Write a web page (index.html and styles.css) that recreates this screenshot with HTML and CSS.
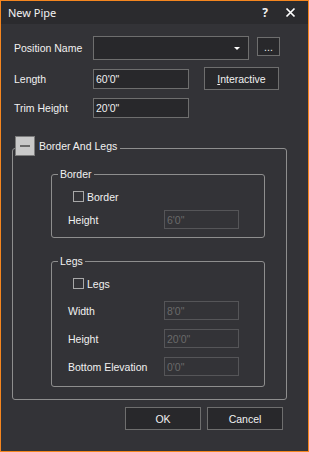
FILE: index.html
```html
<!DOCTYPE html>
<html lang="en">
<head>
  <meta charset="UTF-8">
  <meta name="viewport" content="width=device-width, initial-scale=1.0">
  <title>New Pipe</title>
  <link rel="stylesheet" href="styles.css">
</head>
<body>

  <div class="window">
    <!-- title bar -->
    <div class="titlebar">
      <span class="title">New Pipe</span>
      <span class="help">?</span>
      <span class="close">
        <svg width="11" height="11" viewBox="0 0 11 11"><path d="M1.5 1.5L9.5 9.5M9.5 1.5L1.5 9.5" stroke="#ffffff" stroke-width="1.7"/></svg>
      </span>
    </div>

    <div class="content">
      <div class="row row-position">
        <label class="label">Position Name</label>
        <div class="combo"><span class="arrow"></span></div>
        <button class="btn btn-dots">...</button>
      </div>

      <div class="row row-length">
        <label class="label">Length</label>
        <input class="field" type="text" value="60'0&quot;">
        <button class="btn btn-interactive"><u>I</u>nteractive</button>
      </div>

      <div class="row row-trim">
        <label class="label">Trim Height</label>
        <input class="field" type="text" value="20'0&quot;">
      </div>

      <fieldset class="group group-outer">
        <legend><span class="toggle"><span class="minus"></span></span>Border And Legs</legend>

        <fieldset class="group group-inner group-border">
          <legend>Border</legend>
          <label class="check"><span class="box"></span>Border</label>
          <div class="sub-row first">
            <span class="sub-label">Height</span>
            <input class="field small" type="text" value="6'0&quot;" disabled>
          </div>
        </fieldset>

        <fieldset class="group group-inner group-legs">
          <legend>Legs</legend>
          <label class="check"><span class="box"></span>Legs</label>
          <div class="sub-row first">
            <span class="sub-label">Width</span>
            <input class="field small" type="text" value="8'0&quot;" disabled>
          </div>
          <div class="sub-row">
            <span class="sub-label">Height</span>
            <input class="field small" type="text" value="20'0&quot;" disabled>
          </div>
          <div class="sub-row">
            <span class="sub-label">Bottom Elevation</span>
            <input class="field small" type="text" value="0'0&quot;" disabled>
          </div>
        </fieldset>
      </fieldset>

      <div class="actions">
        <button class="btn btn-action">OK</button>
        <button class="btn btn-action">Cancel</button>
      </div>
    </div>
  </div>

</body>
</html>
```

FILE: styles.css
```css
:root {
  --bg: #333337;
  --bar: #2b2b2e;
  --field: #28282b;
  --line: #6e6e6e;
  --frame: #8e8e8e;
  --text: #f1f1f1;
  --muted: #6a6a6a;
  --accent: #f5861f;
}

* {
  box-sizing: border-box;
}

body {
  margin: 0;
  background: var(--bg);
  font-family: "Liberation Sans", Arial, sans-serif;
  font-size: 10.5px;
  color: var(--text);
}

.window {
  width: 309px;
  height: 452px;
  border: 1px solid var(--accent);
  background: var(--bg);
}

.titlebar {
  height: 23px;
  background: var(--bar);
  display: flex;
  align-items: center;
  padding-left: 7px;
}

.title {
  flex: 1;
  font-family: "Noto Sans", sans-serif;
  font-size: 11px;
}

.help {
  font-family: "Noto Sans", sans-serif;
  font-weight: bold;
  font-size: 12px;
  margin-right: 17px;
}

.close {
  display: flex;
  margin-right: 12px;
}

.content {
  padding: 12px 0 0 13px;
}

.row {
  display: flex;
  align-items: center;
}

.label {
  width: 79px;
}

.field {
  height: 20px;
  width: 96px;
  margin: 0;
  padding: 0 2px;
  background: var(--field);
  border: 1px solid var(--line);
  color: var(--text);
  font-family: inherit;
  font-size: 10.5px;
  outline: none;
}

.field:disabled {
  background: var(--bg);
  border-color: #555558;
  color: var(--muted);
}

.field.small {
  width: 75px;
  height: 19px;
}

.btn {
  margin: 0;
  padding: 0;
  background: var(--field);
  border: 1px solid var(--line);
  color: var(--text);
  font-family: inherit;
  font-size: 10.5px;
}

.row-position {
  height: 24px;
  align-items: flex-start;
}

.row-position .label {
  line-height: 24px;
}

.combo {
  width: 156px;
  height: 24px;
  background: var(--field);
  border: 1px solid var(--line);
  display: flex;
  justify-content: flex-end;
  align-items: center;
  padding-right: 8px;
}

.arrow {
  width: 0;
  height: 0;
  border-left: 3px solid transparent;
  border-right: 3px solid transparent;
  border-top: 3px solid #ffffff;
  margin-top: 1px;
}

.btn-dots {
  width: 23px;
  height: 19px;
  margin: 1px 0 0 8px;
  line-height: 12px;
}

.row-length {
  margin-top: 7px;
  height: 23px;
}

.btn-interactive {
  width: 75px;
  height: 23px;
  margin-left: 15px;
}

.row-trim {
  margin-top: 8px;
  height: 20px;
}

.group {
  margin: 0;
  padding: 0;
  border: 1px solid var(--frame);
  border-radius: 3px;
}

.group legend {
  padding: 0 2px;
}

.group-outer {
  width: 275px;
  margin: 18px 0 0 -2px;
  padding-bottom: 12px;
}

.group-outer > legend {
  display: flex;
  align-items: flex-start;
  height: 24px;
  margin-left: 2px;
  padding: 0 3px 0 0;
  line-height: 20px;
}

.toggle {
  width: 20px;
  height: 20px;
  background: #c9c9c9;
  border: 1px solid #7c7c7c;
  display: flex;
  align-items: center;
  justify-content: center;
  margin-right: 4px;
}

.minus {
  width: 10px;
  height: 2px;
  background: #6a6a6a;
}

.group-inner {
  width: 214px;
  margin-left: 38px;
}

.group-inner > legend {
  margin-left: 6px;
  line-height: 13px;
}

.group-border {
  margin-top: 8px;
  padding-bottom: 8px;
}

.group-legs {
  margin-top: 17px;
  padding-bottom: 10px;
}

.check {
  display: flex;
  align-items: center;
  height: 11px;
  margin: 10px 0 0 21px;
}

.box {
  width: 11px;
  height: 11px;
  border: 1px solid #a8a8a8;
  margin-right: 3px;
}

.sub-row {
  display: flex;
  align-items: center;
  margin: 9px 0 0 16px;
}

.sub-row.first {
  margin-top: 8px;
}

.group-legs .sub-row.first {
  margin-top: 12px;
}

.sub-label {
  width: 96px;
}

.actions {
  display: flex;
  justify-content: flex-end;
  gap: 6px;
  margin-top: 7px;
  padding-right: 25px;
}

.btn-action {
  width: 76px;
  height: 23px;
}
```
